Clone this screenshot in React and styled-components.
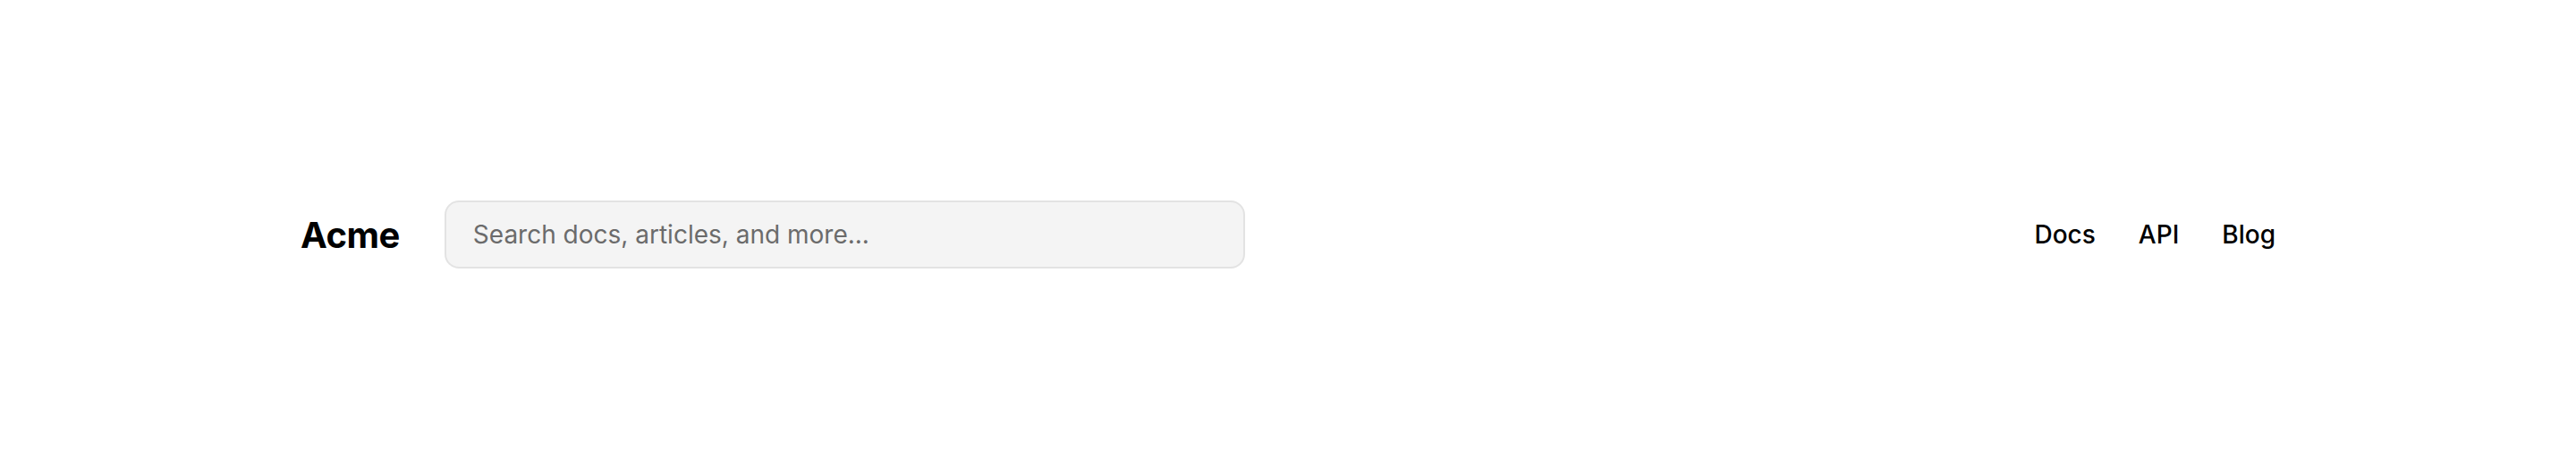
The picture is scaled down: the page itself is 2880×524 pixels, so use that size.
import React from "react";
import styled, { createGlobalStyle } from "styled-components";

const Global = createGlobalStyle`
  html, body { margin: 0; padding: 0; background: #ffffff; }
  body { font-family: Inter, "Noto Sans", sans-serif; -webkit-font-smoothing: antialiased; }
`;

const Page = styled.div`
  height: 524px;
  display: flex;
  align-items: center;
  justify-content: center;
`;

const Header = styled.header`
  width: 2208px;
  display: flex;
  align-items: center;
  justify-content: space-between;
`;

const Left = styled.div`
  display: flex;
  align-items: center;
  gap: 50px;
`;

const Logo = styled.a`
  font-size: 40px;
  font-weight: 700;
  color: #000;
  text-decoration: none;
  letter-spacing: -0.5px;
`;

const Search = styled.input`
  box-sizing: border-box;
  width: 895px;
  height: 76px;
  padding: 0 30px;
  border: 2px solid #e3e3e3;
  border-radius: 16px;
  background: #f4f4f4;
  font-family: Inter, sans-serif;
  font-size: 28px;
  color: #111;
  outline: none;
  &::placeholder { color: #6b6b6b; }
`;

const Nav = styled.nav`
  display: flex;
  align-items: center;
  gap: 48px;
`;

const NavLink = styled.a`
  font-size: 28px;
  font-weight: 500;
  color: #000;
  text-decoration: none;
`;

export default function App() {
  return (
    <>
      <Global />
      <Page>
        <Header>
          <Left>
            <Logo href="#">Acme</Logo>
            <Search placeholder="Search docs, articles, and more..." />
          </Left>
          <Nav>
            <NavLink href="#">Docs</NavLink>
            <NavLink href="#">API</NavLink>
            <NavLink href="#">Blog</NavLink>
          </Nav>
        </Header>
      </Page>
    </>
  );
}
